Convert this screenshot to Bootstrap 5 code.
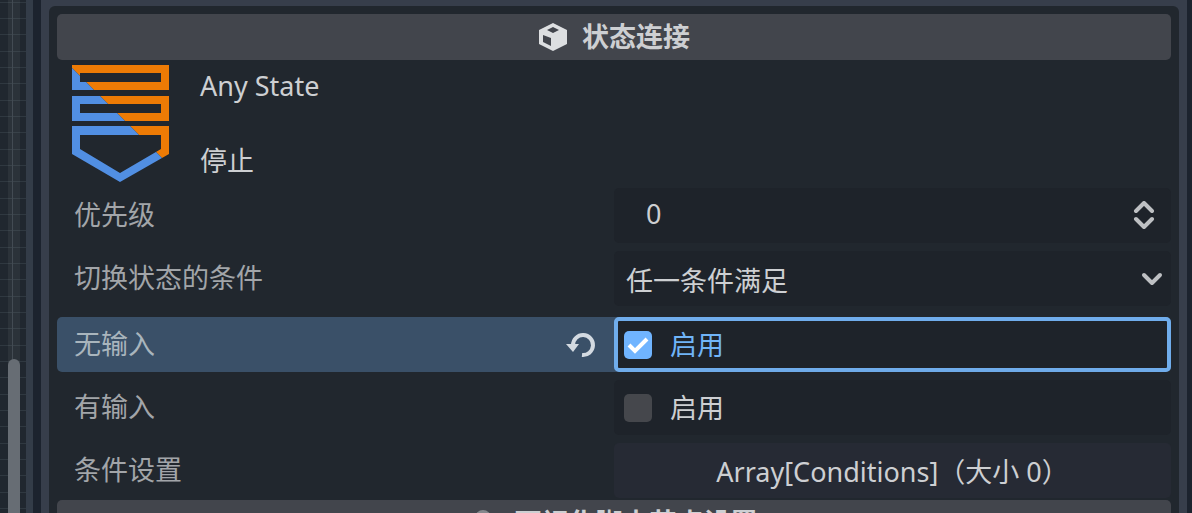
<!DOCTYPE html>
<html lang="zh-CN" data-bs-theme="dark">
<head>
<meta charset="utf-8">
<meta name="viewport" content="width=device-width, initial-scale=1">
<title>状态连接</title>
<link href="https://cdn.jsdelivr.net/npm/bootstrap@5.3.0/dist/css/bootstrap.min.css" rel="stylesheet">
<script src="https://cdn.jsdelivr.net/npm/bootstrap@5.3.0/dist/js/bootstrap.bundle.min.js" defer></script>
<style>
  body { background: #1c232e; color: #cdcfd2; font: 27px/40px "Noto Sans", "Noto Sans CJK SC", sans-serif; }
  .graph-edge { width: 26px; padding-left: 8px; background:
    linear-gradient(#39424a 0 0) 12px 0 / 1px 100% no-repeat,
    linear-gradient(transparent 2px, #2f3840 2px 3px, transparent 3px 18px, #2f3840 18px 19px, transparent 19px 34px, #2f3840 34px 35px, transparent 35px) 0 0 / 100% 49px,
    #20272f; }
  .scroll-track { width: 12px; background: #ffffff0d; }
  .scroll-thumb { height: 30%; border-radius: 6px 6px 0 0; background: #676d74; }
  .split-bar { width: 7px; background: #333c48; }
  .dock { margin: 0 5px 0 8px; padding: 6px 8px 0; background: #373e4b; min-width: 0; }
  .inspector { padding: 8px 8px 0; border-radius: 6px 6px 0 0; background: #21272e; }
  .category { height: 46px; gap: 14px; border-radius: 5px; background: #42454c; color: #cdcfd2; font-size: 27px; line-height: 40px; font-weight: 700; }
  .state-info { height: 128px; padding: 5px 15px 0; gap: 31px; }
  .state-names { padding-top: 1px; gap: 35px; }
  .props { gap: 8px; padding-bottom: 2px; }
  .prop { height: 55px; border-radius: 5px; }
  .prop-name { padding-left: 17px; padding-right: 16px; padding-bottom: 2px; color: #a2a5a9; }
  .prop-value { position: relative; border-radius: 5px; background: #1e232a; }
  .prop.selected { margin-top: 3px; background: #3a5068; }
  .prop.selected .prop-name { color: #a9b5bd; }
  .prop.selected .prop-value { border: 4px solid #70adec; color: #70b4f8; padding-left: 6px; }
  .check-value { padding-left: 10px; gap: 18px; }
  .check-value .form-check-input { width: 28px; height: 28px; margin: 0; border: 0; border-radius: 5px; background-color: #45474c; box-shadow: none; }
  .check-value .form-check-input:checked { background-color: #70b4ff;
    background-image: url("data:image/svg+xml,%3Csvg xmlns='http://www.w3.org/2000/svg' viewBox='0 0 28 28'%3E%3Cpath d='M5 14l6 6L23 8' fill='none' stroke='white' stroke-width='4'/%3E%3C/svg%3E"); }
  .plain-field { width: 100%; height: 100%; border: 0; color: inherit; background: transparent; appearance: none; outline: 0; }
  .number-field { padding: 0 60px 4px 32px; }
  .choice-field { padding: 4px 40px 0 12px; }
  .plain-field option { background: #1d2229; }
  .field-icon { position: absolute; top: 0; bottom: 0; margin: auto 0; pointer-events: none; }
  .spin-icon { right: 16px; }
  .drop-icon { right: 8px; }
  .array-button { background: #262a34; color: inherit; padding-top: 3px; font-family: "Noto Sans", "Noto Sans CJK TC", sans-serif; }
</style>
</head>
<body class="vh-100 overflow-hidden d-flex">
  <div class="graph-edge flex-shrink-0 d-flex align-items-end">
    <div class="scroll-track h-100 d-flex align-items-end"><div class="scroll-thumb w-100"></div></div>
  </div>
  <div class="split-bar flex-shrink-0"></div>
  <main class="dock flex-grow-1">
    <section class="inspector">
      <h2 class="category d-flex align-items-center justify-content-center m-0">
        <svg width="30" height="30" viewBox="0 0 30 30" aria-hidden="true"><path fill="#dddfe1" fill-rule="evenodd" d="M15 1 29 8v14l-14 7-14-7V8zM9 8l6 3 6-3-6-3zM5 13v7l8 4v-8z"/></svg>
        <span>状态连接</span>
      </h2>
      <div class="state-info d-flex">
        <svg class="flex-shrink-0" width="97" height="118" viewBox="0 0 97 118" aria-hidden="true">
          <defs>
            <clipPath id="badge"><path clip-rule="evenodd" d="M0 0h97v25H0zM8 8v9h81V8zM0 31h97v25H0zM8 39v9h81v-9zM0 61h97v28L48 117 0 89zM8 70v14l40 24 41-24V70z"/></clipPath>
          </defs>
          <g clip-path="url(#badge)"><path fill="#ed7b05" d="M0 3V0h97v100z"/><path fill="#518fe3" d="M0 3 97 100v18H0z"/></g>
        </svg>
        <div class="state-names d-flex flex-column">
          <div>Any State</div>
          <div>停止</div>
        </div>
      </div>
      <form class="props d-flex flex-column">
        <div class="prop row g-0">
          <label class="prop-name col-6 d-flex align-items-center" for="priority">优先级</label>
          <div class="prop-value col-6">
            <input class="plain-field number-field" id="priority" type="text" inputmode="numeric" value="0">
            <svg class="field-icon spin-icon" width="22" height="30" viewBox="0 0 22 30" fill="none" stroke="#bec0c3" stroke-width="4" stroke-linecap="round" stroke-linejoin="round" aria-hidden="true"><path d="m3 10 8-8 8 8M3 18l8 8 8-8"/></svg>
          </div>
        </div>
        <div class="prop row g-0">
          <label class="prop-name col-6 d-flex align-items-center" for="condition">切换状态的条件</label>
          <div class="prop-value col-6">
            <select class="plain-field choice-field" id="condition"><option>任一条件满足</option></select>
            <svg class="field-icon drop-icon" width="22" height="14" viewBox="0 0 22 14" fill="none" stroke="#bec0c3" stroke-width="4" stroke-linecap="round" stroke-linejoin="round" aria-hidden="true"><path d="m3 3 8 8 8-8"/></svg>
          </div>
        </div>
        <div class="prop selected row g-0">
          <div class="prop-name col-6 d-flex align-items-center justify-content-between">
            <label for="no-input">无输入</label>
            <button class="btn p-0 border-0 d-flex" type="button" aria-label="重置">
              <svg width="32" height="28" viewBox="0 0 32 28" aria-hidden="true"><path d="M7 15a10 10 0 1 1 9 10" fill="none" stroke="#d3dae1" stroke-width="4"/><path fill="#d3dae1" d="M0 14h13l-6 8z"/></svg>
            </button>
          </div>
          <div class="prop-value check-value col-6 d-flex align-items-center">
            <input class="form-check-input" type="checkbox" id="no-input" checked><label for="no-input">启用</label>
          </div>
        </div>
        <div class="prop row g-0">
          <label class="prop-name col-6 d-flex align-items-center" for="has-input">有输入</label>
          <div class="prop-value check-value col-6 d-flex align-items-center">
            <input class="form-check-input" type="checkbox" id="has-input"><label for="has-input">启用</label>
          </div>
        </div>
        <div class="prop row g-0">
          <label class="prop-name col-6 d-flex align-items-center" for="conditions">条件设置</label>
          <button class="prop-value array-button col-6 border-0" id="conditions" type="button" lang="zh-Hant">Array[Conditions]（大小 0）</button>
        </div>
      </form>
      <h2 class="category d-flex align-items-center justify-content-center m-0">
        <svg width="30" height="30" viewBox="0 0 30 30" aria-hidden="true"><circle cx="12" cy="10" r="8" fill="#85888d"/></svg>
        <span>可视化脚本节点设置</span>
      </h2>
    </section>
  </main>
</body>
</html>
